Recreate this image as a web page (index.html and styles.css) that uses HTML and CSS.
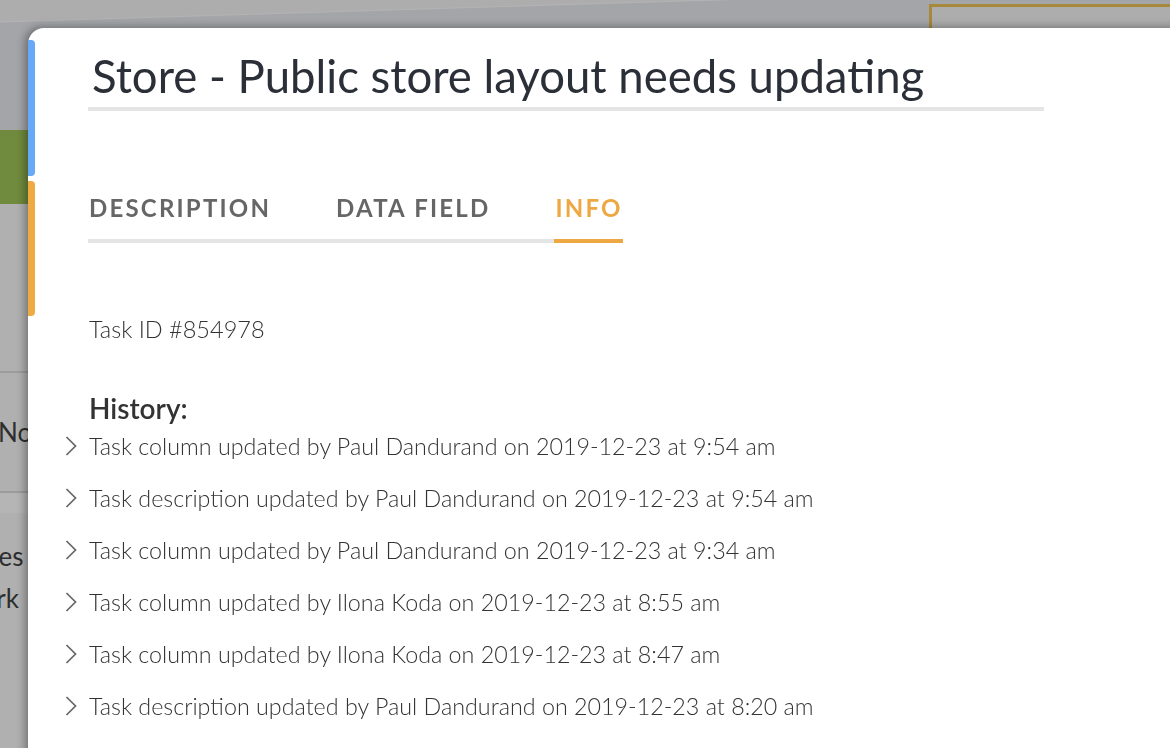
FILE: index.html
```html
<!DOCTYPE html>
<html>
<head>
<meta charset="utf-8">
<link rel="stylesheet" href="styles.css">
</head>
<body>
<div class="backdrop">
  <div class="bd-header">
    <div class="bd-top-box"></div>
  </div>
  <div class="bd-green"></div>
  <div class="bd-gap"></div>
  <div class="bd-row bd-row-a"><span>Not</span></div>
  <div class="bd-strip"></div>
  <div class="bd-row bd-row-b"><span class="des">Des</span><span class="work">Work</span></div>
</div>

<div class="modal">
  <div class="flag flag-blue"></div>
  <div class="flag flag-orange"></div>
  <div class="content">
    <h1 class="title">Store - Public store layout needs updating</h1>
    <div class="tabs">
      <div class="tab">DESCRIPTION</div>
      <div class="tab">DATA FIELD</div>
      <div class="tab active">INFO</div>
    </div>
    <div class="task-id">Task ID #854978</div>
    <div class="history-title">History:</div>
    <ul class="history">
      <li><span class="chev"><svg width="12" height="22" viewBox="0 0 12 22"><path d="M1.5 2 L10.5 11 L1.5 20" fill="none" stroke="#666" stroke-width="1.7"/></svg></span>Task column updated by Paul Dandurand on 2019-12-23 at 9:54 am</li>
      <li><span class="chev"><svg width="12" height="22" viewBox="0 0 12 22"><path d="M1.5 2 L10.5 11 L1.5 20" fill="none" stroke="#666" stroke-width="1.7"/></svg></span>Task description updated by Paul Dandurand on 2019-12-23 at 9:54 am</li>
      <li><span class="chev"><svg width="12" height="22" viewBox="0 0 12 22"><path d="M1.5 2 L10.5 11 L1.5 20" fill="none" stroke="#666" stroke-width="1.7"/></svg></span>Task column updated by Paul Dandurand on 2019-12-23 at 9:34 am</li>
      <li><span class="chev"><svg width="12" height="22" viewBox="0 0 12 22"><path d="M1.5 2 L10.5 11 L1.5 20" fill="none" stroke="#666" stroke-width="1.7"/></svg></span>Task column updated by Ilona Koda on 2019-12-23 at 8:55 am</li>
      <li><span class="chev"><svg width="12" height="22" viewBox="0 0 12 22"><path d="M1.5 2 L10.5 11 L1.5 20" fill="none" stroke="#666" stroke-width="1.7"/></svg></span>Task column updated by Ilona Koda on 2019-12-23 at 8:47 am</li>
      <li><span class="chev"><svg width="12" height="22" viewBox="0 0 12 22"><path d="M1.5 2 L10.5 11 L1.5 20" fill="none" stroke="#666" stroke-width="1.7"/></svg></span>Task description updated by Paul Dandurand on 2019-12-23 at 8:20 am</li>
    </ul>
  </div>
</div>
</body>
</html>
```

FILE: styles.css
```css
html, body {
  margin: 0;
  padding: 0;
  width: 1170px;
  height: 748px;
  overflow: hidden;
  background: #b0b0b0;
  font-family: Lato, "Open Sans", sans-serif;
}

.backdrop {
  display: flex;
  flex-direction: column;
  height: 748px;
}

.bd-header {
  display: flex;
  justify-content: flex-end;
  height: 130px;
  background:
    linear-gradient(178.24deg, #adadad 0, #adadad 21px, #b3b3b3 22px, #a4a5a9 23px, #a4a5a9 100%);
}
.bd-top-box {
  width: 238px;
  height: 40px;
  margin-top: 4px;
  border-top: 3px solid #a8883a;
  border-left: 3px solid #a8883a;
  background: #adadad;
}

.bd-green {
  height: 74px;
  background: #708a3e;
}

.bd-gap {
  height: 167px;
  border-bottom: 2px solid #9c9c9c;
}

.bd-row {
  display: flex;
  flex-direction: column;
  font-weight: 400;
  color: #2e2e2e;
  font-size: 26px;
  white-space: nowrap;
}
.bd-row-a {
  height: 118px;
  justify-content: center;
  margin-left: -2px;
  border-bottom: 2px solid #9c9c9c;
}
.bd-strip {
  height: 20px;
  background: #b5b5b5;
}
.bd-row-b {
  padding-top: 22px;
  line-height: 42px;
}
.bd-row-b .des {
  margin-left: -21px;
}
.bd-row-b .work {
  margin-left: -44px;
}

.modal {
  position: fixed;
  left: 28px;
  top: 28px;
  right: -40px;
  bottom: -40px;
  background: #fff;
  border-top-left-radius: 16px;
  box-shadow: -3px -1px 8px rgba(0, 0, 0, 0.35);
}

.flag {
  position: absolute;
  left: 0;
  width: 7px;
  border-radius: 0 4px 4px 0;
}
.flag-blue {
  top: 12px;
  height: 136px;
  background: #68a9f7;
}
.flag-orange {
  top: 153px;
  height: 135px;
  background: #efab43;
}

.content {
  padding-left: 60px;
  padding-top: 22px;
  color: #2b2f38;
}

.title {
  margin: 0;
  width: 956px;
  font-size: 45.5px;
  font-weight: 400;
  line-height: 52px;
  padding-left: 4px;
  box-sizing: border-box;
  padding-bottom: 5px;
  border-bottom: 4px solid #e5e5e5;
  white-space: nowrap;
}

.tabs {
  display: flex;
  gap: 64px;
  width: 534px;
  margin-top: 82px;
  border-bottom: 4px solid #e5e5e5;
}
.tab {
  flex-shrink: 0;
  white-space: nowrap;
  font-size: 24px;
  font-weight: 700;
  letter-spacing: 2.2px;
  color: #666;
  line-height: 30px;
  padding-bottom: 16px;
  margin-bottom: -4px;
  border-bottom: 4px solid transparent;
  padding-left: 1px;
}
.tab.active {
  color: #eea843;
  border-bottom-color: #eea843;
}

.task-id {
  margin-top: 72px;
  font-size: 23.5px;
  font-weight: 300;
  color: #333;
  line-height: 28px;
  padding-left: 1px;
}

.history-title {
  margin-top: 50px;
  font-size: 28px;
  font-weight: 600;
  color: #333;
  line-height: 30px;
  padding-left: 1px;
}

.history {
  list-style: none;
  margin: -3px 0 0 -28px;
  padding: 0;
}
.history li {
  display: flex;
  align-items: center;
  height: 52px;
  font-size: 23.3px;
  font-weight: 300;
  color: #333;
  white-space: nowrap;
}
.chev {
  display: flex;
  width: 29px;
  padding-left: 5px;
  box-sizing: border-box;
}
```
